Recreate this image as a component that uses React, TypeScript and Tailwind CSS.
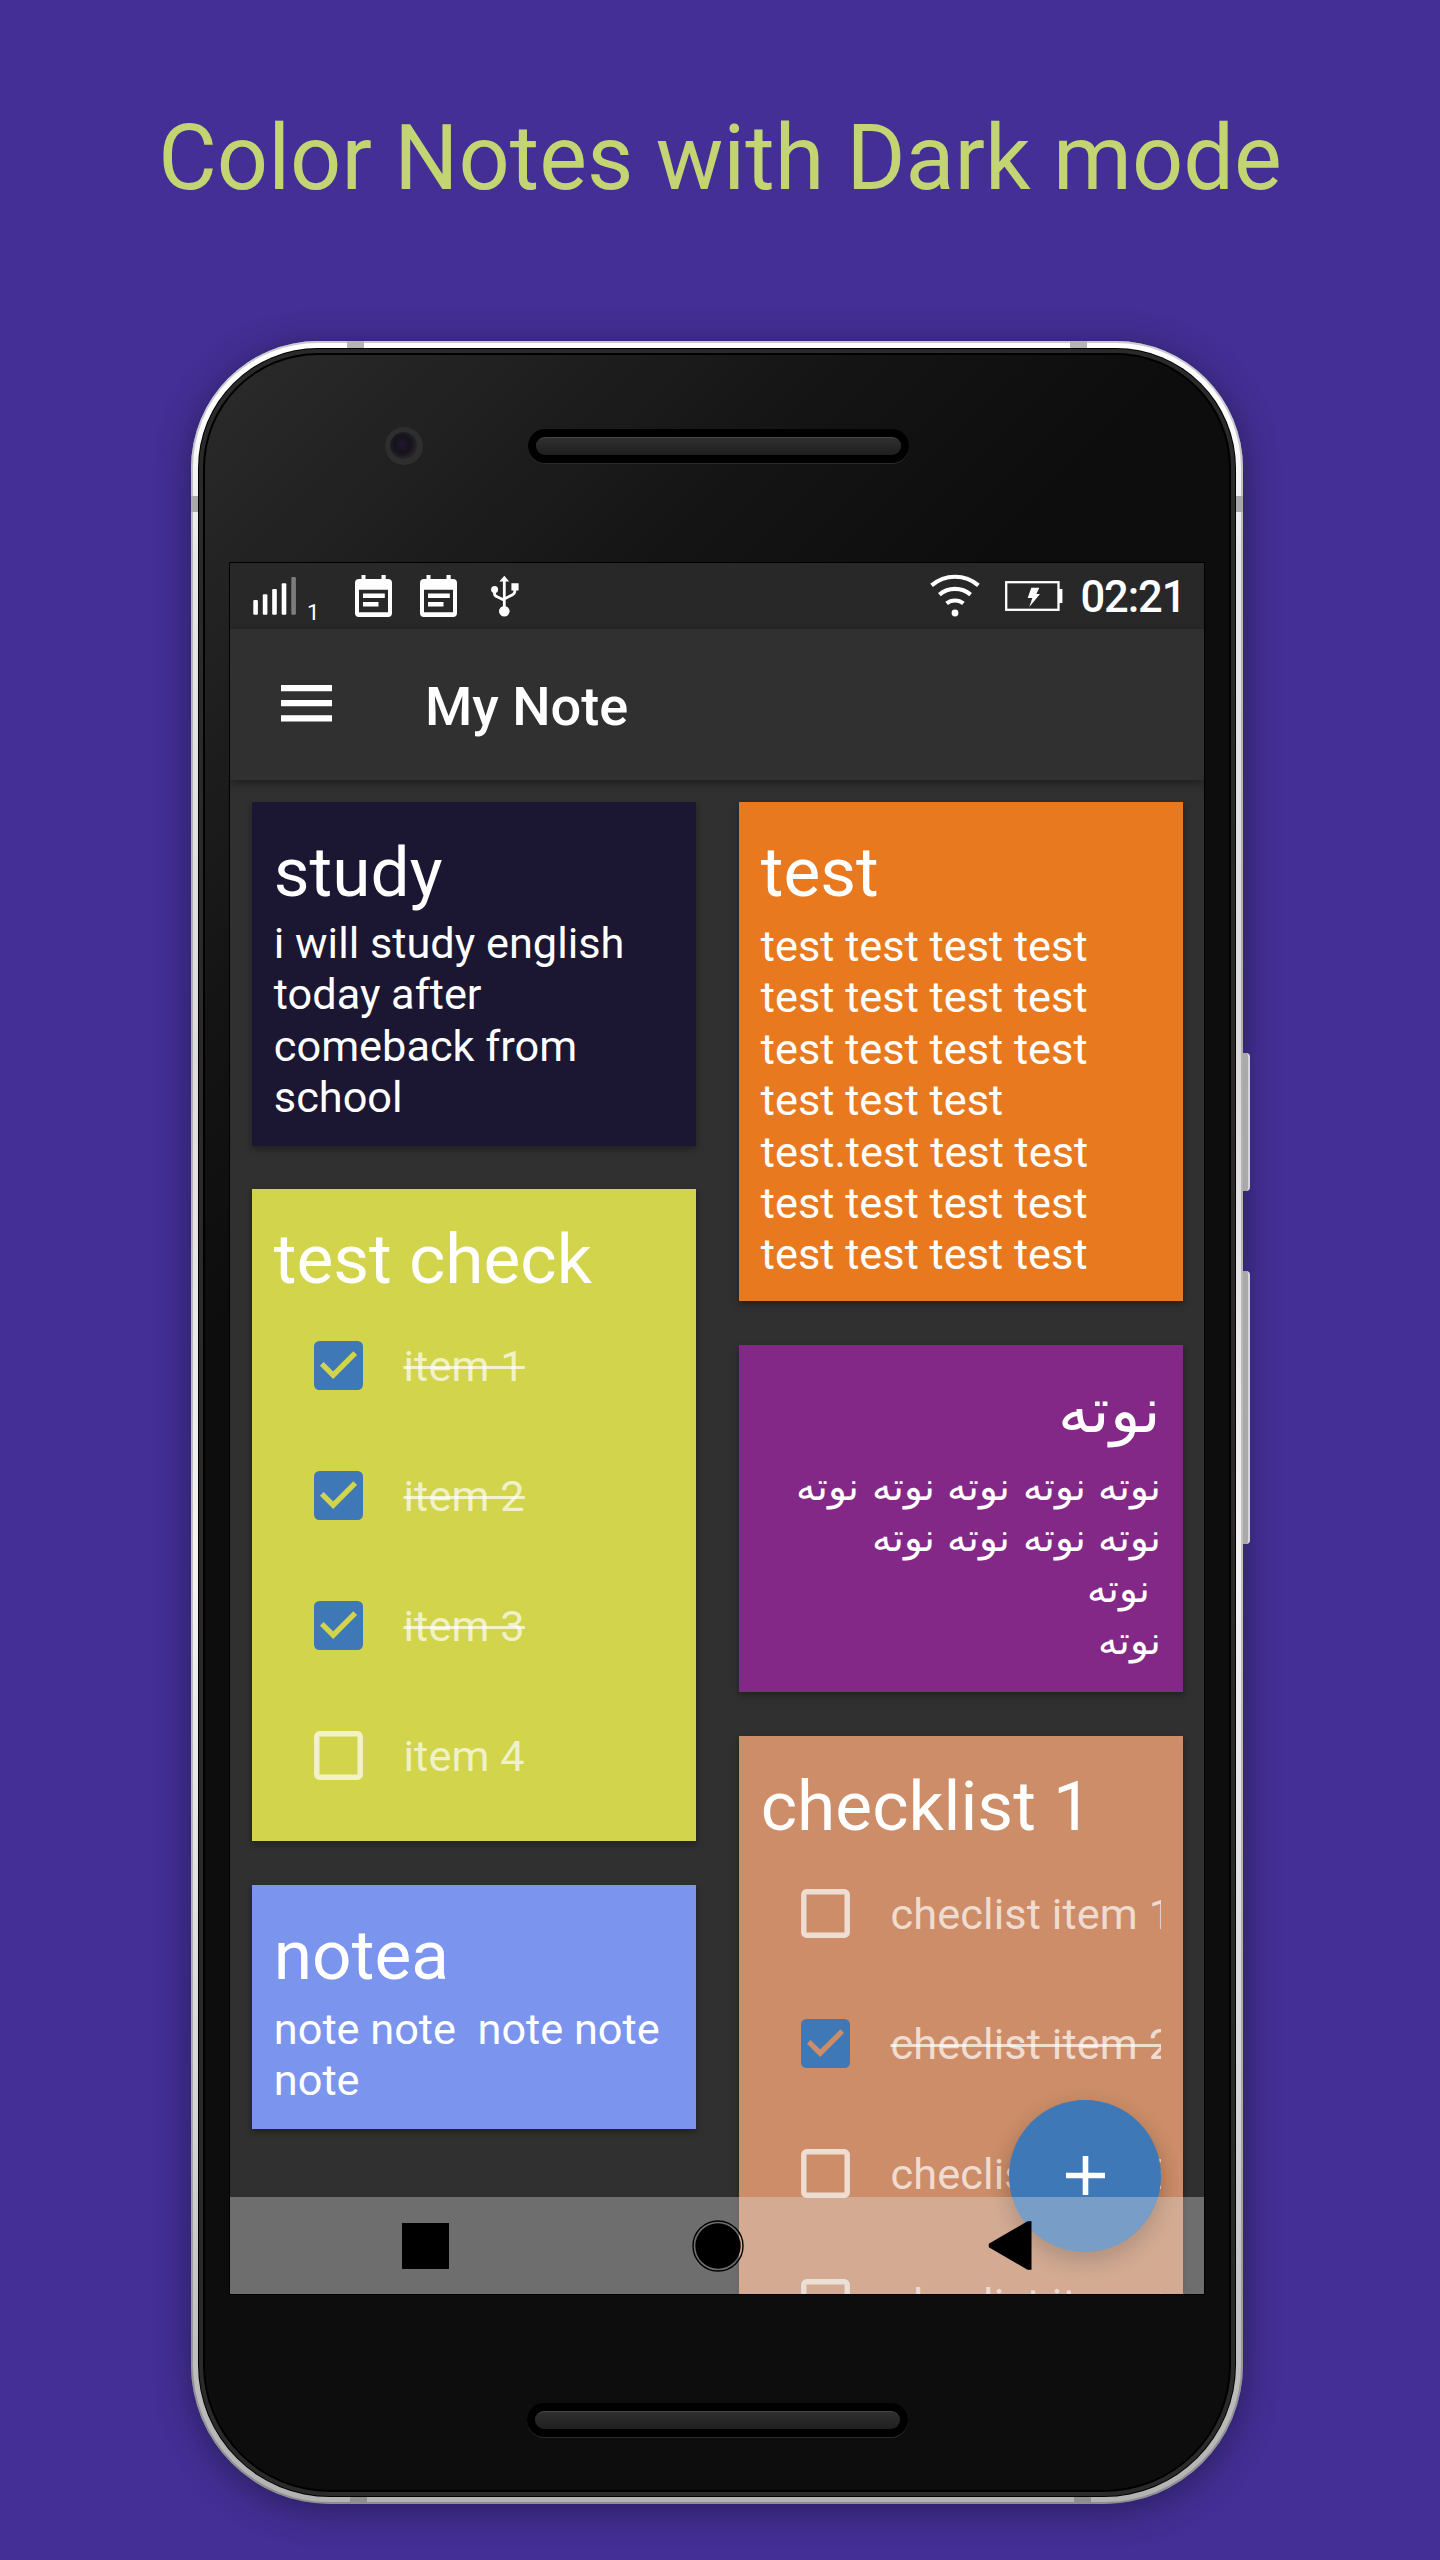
import type { ReactNode } from "react";

function SignalIcon() {
  return (
    <svg className="h-[42px] w-[44px] shrink-0" viewBox="0 0 44 42" fill="#fff">
      <rect x="0.3" y="25" width="4.6" height="14.7" rx="1" />
      <rect x="9.8" y="19.2" width="4.6" height="20.5" rx="1" />
      <rect x="19.2" y="14" width="4.6" height="25.7" rx="1" />
      <rect x="28.7" y="8.3" width="4.6" height="31.4" rx="1" />
      <rect x="38.3" y="1.9" width="4.6" height="37.8" rx="1" fill="#7d7d7d" />
    </svg>
  );
}

function CalendarIcon() {
  return (
    <svg className="h-[42px] w-[37px] shrink-0" viewBox="0 0 37 42">
      <path
        fill="#fff"
        fillRule="evenodd"
        d="M6.5 0h4v4h16V0h4.2v4H33a4 4 0 0 1 4 4v30a4 4 0 0 1-4 4H4a4 4 0 0 1-4-4V8a4 4 0 0 1 4-4h2.5zM4 14.7v22.5h29V14.7z"
      />
      <path fill="#fff" d="M8 18.6h21.8v4.4H8zM8 27h15.5v4.4H8z" />
    </svg>
  );
}

function UsbIcon() {
  return (
    <svg className="h-[42px] w-[28px] shrink-0" viewBox="0 0 28 42" fill="none" stroke="#fff">
      <path strokeWidth="2.8" d="M13.3 5v30M3.5 13v5.5c0 1.6.8 2.5 2.2 3.1l7.6 3.7M23.8 12v4.5c0 1.6-.8 2.5-2.2 3.2l-8.3 4.2" />
      <path fill="#fff" stroke="none" d="M13.3.8 18.2 6.6H8.4zM20.4 8.3h7.2v7.2h-7.2z" />
      <circle cx="3.6" cy="14.4" r="3.5" fill="#fff" stroke="none" />
      <circle cx="13.3" cy="36.3" r="5.3" fill="#fff" stroke="none" />
    </svg>
  );
}

function WifiIcon() {
  return (
    <svg className="h-[43px] w-[50px] shrink-0" viewBox="0 0 50 43" fill="none" stroke="#fff" strokeWidth="4.1">
      <path d="M1.6 11.4a36 36 0 0 1 46.8 0" />
      <path d="M9.4 20.6a24 24 0 0 1 31.2 0" />
      <path d="M16.6 29.4a13.5 13.5 0 0 1 16.8 0" />
      <circle cx="25" cy="39" r="3.4" fill="#fff" stroke="none" />
    </svg>
  );
}

function BatteryIcon() {
  return (
    <svg className="h-[30px] w-[58px] shrink-0" viewBox="0 0 58 30">
      <rect x="1.2" y="1.2" width="52.3" height="27.6" fill="none" stroke="#fff" strokeWidth="2.3" />
      <path fill="#fff" d="M54 8h3.4v14H54zM26.3 6.7h8L31.4 13H35L24.3 26l3-9h-4.6z" />
    </svg>
  );
}

function Checkbox({ checked }: { checked?: boolean }) {
  return (
    <svg className="h-[49px] w-[49px] shrink-0" viewBox="0 0 49 49">
      {checked ? (
        <>
          <rect width="49" height="49" rx="5.4" fill="#3f78b7" />
          <path d="M7.8 22.8 19.2 34.2 41.2 12.2" fill="none" stroke="currentColor" strokeWidth="5.2" />
        </>
      ) : (
        <rect x="2.8" y="2.8" width="43.4" height="43.4" rx="2.8" fill="none" stroke="#fff" strokeOpacity="0.7" strokeWidth="5.4" />
      )}
    </svg>
  );
}

function Item({ label, checked, tint }: { label: string; checked?: boolean; tint: string }) {
  return (
    <div className="flex h-[129.9px] items-center overflow-hidden whitespace-nowrap pl-[40px]">
      <span className={`flex ${tint}`}>
        <Checkbox checked={checked} />
      </span>
      <span
        className={
          checked
            ? "ml-[40.7px] pt-[2px] text-[43.3px] leading-[51px] tracking-[0.1px] text-white/70 line-through decoration-white/70 decoration-[3px]"
            : "ml-[40.7px] pt-[2px] text-[43.3px] leading-[51px] tracking-[0.1px] text-white/70"
        }
      >
        {label}
      </span>
    </div>
  );
}

function Card({ title, color, children }: { title: string; color: string; children: ReactNode }) {
  return (
    <article className={`shrink-0 px-[21.8px] pt-[30px] shadow-[0_3px_7px_rgba(0,0,0,0.35)] ${color}`}>
      <h2 className="text-[69.4px] leading-[81px]">{title}</h2>
      {children}
    </article>
  );
}

function Speaker() {
  return (
    <div className="h-[34px] w-[381px] rounded-full bg-black p-[8px] shadow-[0_1px_0_#2a2a2a]">
      <div className="h-[18px] rounded-full border-t border-[#484848] bg-linear-to-b from-[#2f2f2f] to-[#1f1f1f]" />
    </div>
  );
}

export default function App() {
  return (
    <main className="flex h-[2560px] w-[1440px] flex-col overflow-hidden bg-[#432f95] font-[Roboto,sans-serif] text-white">
      <h1 className="h-[341px] shrink-0 pt-[106px] text-center text-[90px] leading-[106px] text-[#c3d472]">
        Color Notes with Dark mode
      </h1>

      <div className="relative ml-[191px] h-[2162.5px] w-[1052px] shrink-0">
        <div className="pointer-events-none absolute inset-0 rounded-t-[127px] rounded-b-[139px] shadow-[0_6px_36px_rgba(0,0,0,0.38)]" />
        <div className="absolute top-[712px] left-[1050px] h-[138px] w-[9px] rounded-r-[4px] border-r-2 border-[#d6d6d6] bg-[#a9a9a9]" />
        <div className="absolute top-[930px] left-[1050px] h-[273px] w-[9px] rounded-r-[4px] border-r-2 border-[#d6d6d6] bg-[#a9a9a9]" />

        <div className="relative h-full overflow-hidden rounded-t-[127px] rounded-b-[139px] bg-[linear-gradient(180deg,#ffffff_0%,#fff_3%,#e6e6e6_10%,#dcdada_33%,#f5f2f2_56%,#d4d4d4_82%,#b2b2b2_100%)] p-[7px]">
          <div className="pointer-events-none absolute inset-0 rounded-t-[127px] rounded-b-[139px] border-[2.5px] border-black/20" />
          <div className="absolute top-0 left-[156px] h-[8px] w-[17px] bg-[#b5b5b5]" />
          <div className="absolute top-0 left-[879px] h-[8px] w-[17px] bg-[#b5b5b5]" />
          <div className="absolute bottom-0 left-[159px] h-[8px] w-[17px] bg-[#8e8e8e]" />
          <div className="absolute bottom-0 left-[883px] h-[8px] w-[17px] bg-[#8e8e8e]" />
          <div className="absolute top-[155px] left-0 h-[16px] w-[8px] bg-[#a9a9a9]" />
          <div className="absolute top-[155px] right-0 h-[16px] w-[8px] bg-[#a9a9a9]" />

          <div className="relative h-full rounded-t-[120px] rounded-b-[132px] bg-black p-px">
            <div className="h-full rounded-t-[119px] rounded-b-[131px] bg-[#2a2a2a] p-[4px]">
              <div className="h-full rounded-t-[115px] rounded-b-[127px] bg-black p-[2px]">
                <div className="flex h-full flex-col overflow-hidden rounded-t-[113px] rounded-b-[125px] bg-[linear-gradient(135deg,#2b2b2b_0%,#131313_22%,#0d0d0d_32%)]">
                  <div className="flex h-[181px] shrink-0 items-center">
                    <div className="ml-[179.5px] flex h-[38px] w-[38px] items-center justify-center rounded-full bg-[#2e2e2e]">
                      <div className="h-[27px] w-[27px] rounded-full bg-[radial-gradient(circle_at_45%_45%,#221630_0%,#15131a_40%,#2a262f_75%,#111_100%)]" />
                    </div>
                    <div className="ml-[105px]">
                      <Speaker />
                    </div>
                  </div>

                  <div className="mt-[26px] ml-[24px] w-[976px] shrink-0 border border-black">
                    <div className="relative flex h-[1731px] flex-col overflow-hidden bg-[#303030]">
                      <div className="flex h-[65.5px] shrink-0 items-center bg-[#282828] pl-[23px]">
                        <SignalIcon />
                        <span className="ml-[10px] w-[11px] pt-[34px] text-[22px] leading-[24px]">1</span>
                        <span className="ml-[37px] flex gap-[28px]">
                          <CalendarIcon />
                          <CalendarIcon />
                        </span>
                        <span className="ml-[33.5px] flex">
                          <UsbIcon />
                        </span>
                        <span className="ml-[411.5px] flex items-center">
                          <WifiIcon />
                          <span className="ml-[25px] flex">
                            <BatteryIcon />
                          </span>
                          <span className="ml-[17.5px] pt-[5px] text-[43.5px] leading-[50px] font-medium tracking-[-1.1px]">02:21</span>
                        </span>
                      </div>

                      <header className="relative flex h-[151px] shrink-0 items-center bg-[#303030] pl-[50.5px] shadow-[0_3px_8px_rgba(0,0,0,0.4)]">
                        <svg className="mt-[-2px] h-[37px] w-[51px]" viewBox="0 0 51 37" fill="#fff">
                          <path d="M0 0h51v6.2H0zM0 15h51v6.2H0zM0 30.2h51v6.2H0z" />
                        </svg>
                        <span className="ml-[93.5px] pt-[6px] text-[54.1px] leading-[64px] font-medium">My Note</span>
                      </header>

                      <div className="flex items-start gap-[43.5px] pt-[22px] pl-[22px]">
                        <div className="flex w-[443.5px] flex-col gap-[43.5px]">
                          <Card title="study" color="h-[344px] bg-[#1b1733]">
                            <p className="mt-[5.5px] text-[43.3px] leading-[51.4px]">
                              i will study english today after comeback from school
                            </p>
                          </Card>
                          <Card title="test check" color="h-[652px] bg-[#d2d44c]">
                            <div className="mt-px">
                              <Item label="item 1" checked tint="text-[#d2d44c]" />
                              <Item label="item 2" checked tint="text-[#d2d44c]" />
                              <Item label="item 3" checked tint="text-[#d2d44c]" />
                              <Item label="item 4" tint="text-[#d2d44c]" />
                            </div>
                          </Card>
                          <Card title="notea" color="h-[244.5px] bg-[#7b94ee]">
                            <p className="mt-[8.5px] text-[43.3px] leading-[51.4px]">
                              note note &nbsp;note note note
                            </p>
                          </Card>
                        </div>

                        <div className="flex w-[443.5px] flex-col gap-[43.5px]">
                          <Card title="test" color="h-[499.5px] bg-[#e8791f]">
                            <p className="mt-[8.5px] text-[43.3px] leading-[51.4px]">
                              test test test test test test test test test test test test test test test
                              <br />
                              test.test test test test test test test test test test test
                            </p>
                          </Card>
                          <article
                            dir="rtl"
                            className="h-[347.5px] shrink-0 bg-[#842888] px-[21.5px] pt-[25px] shadow-[0_3px_7px_rgba(0,0,0,0.35)]"
                          >
                            <h2 className="text-[63px] leading-[81px]">نوته</h2>
                            <p className="mt-[10px] text-[38.8px] leading-[51.4px] [word-spacing:2.8px]">
                              نوته نوته نوته نوته نوته
                              <br />
                              نوته نوته نوته نوته
                              <br />
                              <span className="pr-[11px]">نوته</span>
                              <br />
                              نوته
                            </p>
                          </article>
                          <Card title="checklist 1" color="h-[720px] bg-[#cc8d68]">
                            <div className="mt-[2.5px]">
                              <Item label="checlist item 1" tint="text-[#cc8d68]" />
                              <Item label="checlist item 2" checked tint="text-[#cc8d68]" />
                              <Item label="checlist item 3" tint="text-[#cc8d68]" />
                              <Item label="checlist item 4" tint="text-[#cc8d68]" />
                            </div>
                          </Card>
                        </div>
                      </div>

                      <button className="absolute right-[43px] bottom-[42.5px] flex h-[152px] w-[152px] items-center justify-center rounded-full bg-[#3f78b7] shadow-[0_10px_22px_rgba(0,0,0,0.28)]">
                        <svg className="h-[39px] w-[39px]" viewBox="0 0 39 39" fill="#fff">
                          <path d="M16.7 0h5.6v16.7H39v5.6H22.3V39h-5.6V22.3H0v-5.6h16.7z" />
                        </svg>
                      </button>

                      <nav className="absolute inset-x-0 bottom-0 flex h-[97px] items-center bg-[#e2e2e2]/35 pl-[172px]">
                        <span className="h-[46px] w-[46.5px] bg-black" />
                        <svg className="ml-[243px] h-[52px] w-[52px]" viewBox="0 0 52 52">
                          <circle cx="26" cy="26" r="25" fill="none" stroke="#000" strokeWidth="1.4" />
                          <circle cx="26" cy="26" r="22.7" fill="#000" />
                        </svg>
                        <svg className="ml-[244px] h-[49px] w-[44px]" viewBox="0 0 44 49">
                          <path d="M39.5.3h4v48.4h-4L.8 26.2v-3.4z" />
                        </svg>
                      </nav>
                    </div>
                  </div>

                  <div className="mt-[108px] ml-[322px]">
                    <Speaker />
                  </div>
                </div>
              </div>
            </div>
          </div>
        </div>
      </div>
    </main>
  );
}
